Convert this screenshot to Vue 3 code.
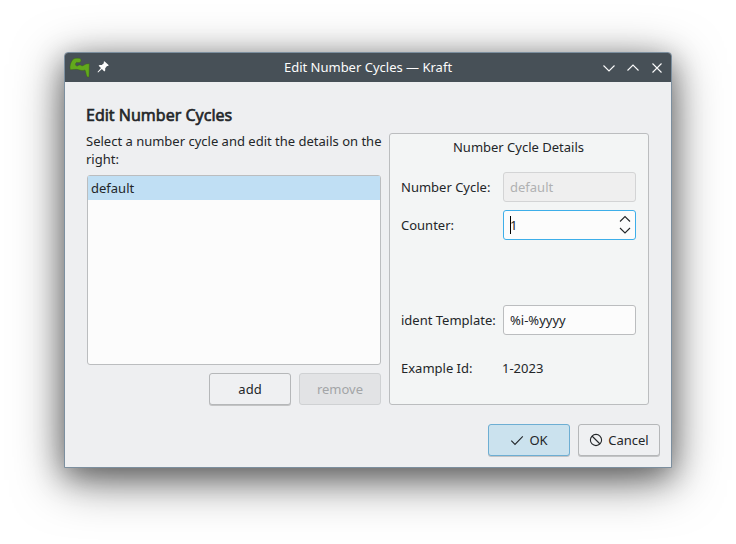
<script setup>
import { ref } from 'vue'

const cycles = ref(['default'])
const selected = ref('default')
const counter = ref('1')
const template = ref('%i-%yyyy')
</script>

<template>
  <div class="desktop">
    <main class="window">
      <header class="titlebar">
        <div class="side">
          <svg class="logo" width="22" height="22" viewBox="0 0 66 66">
            <path d="M3.5 37 C1.5 29 4 17 11 8 C15 4 23 3 31 4 C36 5 37 10 35 14 C32 17 27 17 23 16 L20 19 C18 24 21 28 26 27 C30 23 35 23 39 27 C43 26 48 23 51 21 L61 20 L60 60 L55 60 C50 53 52 47 48 39 C41 42 35 40 29 38 C19 36 11 38 5 38 Z" fill="#62a91c" stroke="#39630f" stroke-width="1.2" />
          </svg>
          <svg class="pin" width="12" height="12" viewBox="0 0 12 12">
            <path d="M7.4 .2 L11.8 4.2 L10.9 5.1 L10 4.9 L8.2 7.2 L8.2 9.5 L7.3 10.4 L4.9 8.1 L1.1 11.5 L.5 11 L4 7.1 L1.6 4.7 L2.6 3.9 L4.8 3.9 L7 2 L6.6 1 Z" fill="#fcfcfc" />
          </svg>
        </div>
        <span class="caption">Edit Number Cycles — Kraft</span>
        <div class="side controls">
          <svg width="12" height="12" viewBox="0 0 12 12"><path d="M.5 3.5 L6 9 L11.5 3.5" /></svg>
          <svg width="12" height="12" viewBox="0 0 12 12"><path d="M.5 8.5 L6 3 L11.5 8.5" /></svg>
          <svg width="12" height="12" viewBox="0 0 12 12"><path d="M1.5 1.5 L10.5 10.5 M10.5 1.5 L1.5 10.5" /></svg>
        </div>
      </header>

      <div class="content">
        <h1>Edit Number Cycles</h1>
        <div class="columns">
          <section class="left">
            <p>Select a number cycle and edit the details on the right:</p>
            <ul class="list">
              <li v-for="c in cycles" :key="c" :class="{ selected: c === selected }">{{ c }}</li>
            </ul>
            <div class="actions">
              <button class="btn">add</button>
              <button class="btn" disabled>remove</button>
            </div>
          </section>

          <section class="details">
            <h2>Number Cycle Details</h2>
            <div class="row">
              <span class="label">Number Cycle:</span>
              <div class="field disabled">default</div>
            </div>
            <div class="row">
              <span class="label">Counter:</span>
              <div class="field focused">
                <i class="caret"></i><span>{{ counter }}</span>
                <svg class="spin" width="12" height="20" viewBox="0 0 12 20">
                  <path d="M1 6.5 L6 1.5 L11 6.5 M1 13 L6 18 L11 13" />
                </svg>
              </div>
            </div>
            <div class="row template">
              <span class="label">ident Template:</span>
              <div class="field">{{ template }}</div>
            </div>
            <div class="row example">
              <span class="label">Example Id:</span>
              <span class="value">1-2023</span>
            </div>
          </section>
        </div>

        <footer>
          <button class="btn primary">
            <svg width="16" height="16" viewBox="0 0 16 16"><path d="M2.3 8.7 L6 12.4 L13.8 4.3" /></svg>
            <span>OK</span>
          </button>
          <button class="btn">
            <svg width="16" height="16" viewBox="0 0 16 16"><circle cx="8" cy="8" r="5.6" /><path d="M4 4 L12 12" /></svg>
            <span>Cancel</span>
          </button>
        </footer>
      </div>
    </main>
  </div>
</template>

<style>
body {
  background: #fff;
}
</style>

<style scoped>
* {
  box-sizing: border-box;
}
.desktop {
  width: 736px;
  height: 544px;
  padding: 52px 64px 0;
  overflow: hidden;
  font: 13px/18px "Noto Sans", sans-serif;
  color: #232629;
}
.window {
  width: 608px;
  height: 416px;
  border: 1px solid #7c8f9f;
  border-radius: 4px 4px 0 0;
  background: #eeeff1;
  box-shadow: 0 12px 50px rgba(0, 0, 0, .52), 0 8px 28px rgba(0, 0, 0, .35);
}
.titlebar {
  display: flex;
  align-items: center;
  justify-content: space-between;
  height: 29px;
  padding: 0 8px 0 4px;
  border-radius: 3px 3px 0 0;
  background: #475057;
  color: #fcfcfc;
}
.side {
  display: flex;
  align-items: center;
  width: 64px;
}
.caption {
  padding: 0 0 1px 4px;
}
.pin {
  margin: 0 0 1px 6px;
}
.controls {
  gap: 12px;
  justify-content: flex-end;
}
.controls svg {
  fill: none;
  stroke: #fcfcfc;
  stroke-width: 1.1;
}
.content {
  display: flex;
  flex-direction: column;
  padding: 21px 11px 0 21px;
}
h1 {
  margin: 0;
  height: 24px;
  font-size: 16px;
  line-height: 24px;
  font-weight: 400;
  -webkit-text-stroke: .6px #232629;
}
.columns {
  display: flex;
  gap: 8px;
  margin-top: 6px;
}
.left {
  display: flex;
  flex-direction: column;
  width: 295px;
  height: 272px;
}
p {
  margin: -1px -4px 0 0;
}
.list {
  height: 190px;
  margin: 7px 0 0 1px;
  padding: 1px 0 0;
  border: 1px solid #bbbdbf;
  border-radius: 3px;
  background: #fcfcfc;
  list-style: none;
}
li {
  height: 24px;
  margin-top: -1px;
  padding-left: 3px;
  line-height: 24px;
}
li.selected {
  background: #c0dff4;
}
.actions,
footer {
  display: flex;
  justify-content: flex-end;
  gap: 8px;
}
.actions {
  margin-top: 8px;
}
footer {
  margin-top: 19px;
}
.btn {
  display: flex;
  align-items: center;
  justify-content: center;
  gap: 4px;
  width: 82px;
  height: 32px;
  padding: 0;
  border: 1px solid #b5b7b9;
  border-radius: 3px;
  background: #eff0f2;
  box-shadow: 0 1px 0 rgba(0, 0, 0, .18);
  font: inherit;
  color: inherit;
}
.btn span {
  margin-right: 1px;
}
.btn:disabled {
  border-color: #cfd1d3;
  background: #e2e3e5;
  box-shadow: none;
  color: #a3a5a7;
}
.btn.primary {
  border-color: #6daed3;
  background: #cbe2ee;
}
.btn svg {
  fill: none;
  stroke: #232629;
  stroke-width: 1.1;
}
.details {
  width: 260px;
  height: 272px;
  padding: 4px 12px 0 11px;
  border: 1px solid #bbbdbf;
  border-radius: 3px;
  background: #f3f5f5;
}
h2 {
  margin: 0 0 16px;
  font-size: inherit;
  font-weight: 400;
  text-align: center;
}
.row {
  display: flex;
  align-items: center;
  height: 30px;
  margin-bottom: 8px;
}
.label {
  flex: none;
  width: 102px;
  white-space: nowrap;
}
.row.template {
  margin: 65px 0 0;
}
.row.example {
  height: 18px;
  margin-top: 24px;
}
.value {
  margin-left: -1px;
}
.field {
  display: flex;
  align-items: center;
  width: 134px;
  height: 30px;
  padding: 0 4px 0 6px;
  border: 1px solid #bbbdbf;
  border-radius: 3px;
  background: #fcfcfc;
}
.field.disabled {
  border-color: #d3d4d5;
  background: #efefef;
  color: #b0b1b2;
}
.field.focused {
  border-color: #3daee9;
}
.caret {
  width: 1px;
  height: 18px;
  margin-right: -1px;
  background: #000;
}
.spin {
  margin-left: auto;
  fill: none;
  stroke: #232629;
  stroke-width: 1.1;
}
</style>
